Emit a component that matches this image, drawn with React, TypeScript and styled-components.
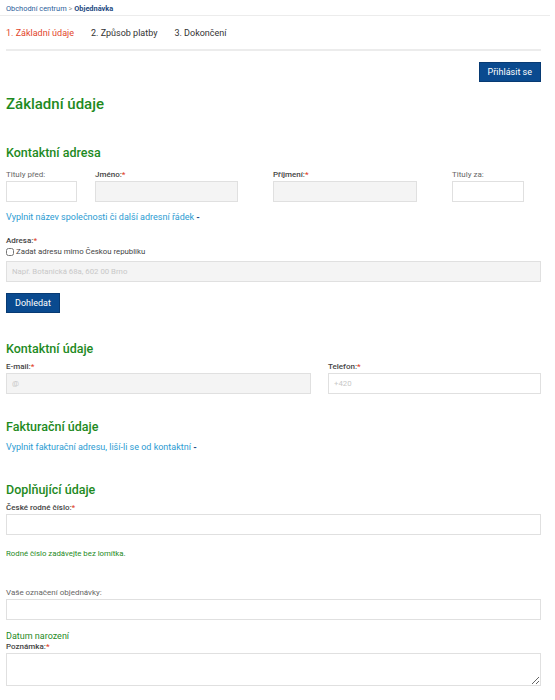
import styled, { createGlobalStyle } from 'styled-components';

const GlobalStyle = createGlobalStyle`
  body {
    margin: 0;
    background: #ffffff;
    font-family: Roboto, "Liberation Sans", Arial, sans-serif;
    color: #333333;
  }
`;

const Breadcrumb = styled.div`
  height: 16px;
  padding: 4px 0 0 6px;
  box-sizing: border-box;
  width: 550px;
  border-bottom: 1px solid #ececec;
  font-size: 7.4px;
  color: #2a5d9a;
  i {
    font-style: normal;
    color: #999999;
  }
  b {
    font-weight: 700;
    color: #1d4a82;
  }
`;

const Page = styled.div`
  padding: 0 14px 20px 6px;
`;

const Steps = styled.div`
  display: flex;
  gap: 17px;
  padding: 12px 0 11px;
  border-bottom: 2px solid #ececec;
  font-size: 9px;
`;

const Step = styled.span<{ $active?: boolean }>`
  color: ${(p) => (p.$active ? '#e2452b' : '#333333')};
`;

const TopBar = styled.div`
  display: flex;
  justify-content: flex-end;
  padding-top: 11px;
`;

const Button = styled.button`
  background: #0a4a8f;
  color: #ffffff;
  border: 1px solid #073a73;
  font-family: inherit;
  font-size: 9px;
  font-weight: 400;
  height: 20px;
  padding: 0 8px;
  cursor: pointer;
`;

const Title = styled.h1`
  margin: 13px 0 0;
  font-size: 15px;
  font-weight: 500;
  color: #1e8a1e;
`;

const Section = styled.h2<{ $top: number }>`
  margin: ${(p) => p.$top}px 0 0;
  font-size: 12.5px;
  font-weight: 500;
  color: #1e8a1e;
  line-height: 18px;
`;

const NameRow = styled.div`
  display: grid;
  grid-template-columns: 89px 178px 179px 1fr;
  margin-top: 8px;
`;

const TwoCols = styled.div`
  display: grid;
  grid-template-columns: 322px 1fr;
  margin-top: 4px;
`;

const Field = styled.div<{ $top?: number }>`
  display: flex;
  flex-direction: column;
  margin-top: ${(p) => p.$top ?? 0}px;
`;

const Label = styled.label<{ $strong?: boolean }>`
  font-size: 8px;
  line-height: 10px;
  height: 10px;
  margin-bottom: 1px;
  color: ${(p) => (p.$strong ? '#444444' : '#666666')};
  font-weight: ${(p) => (p.$strong ? 500 : 400)};
  em {
    font-style: normal;
    color: #e2452b;
  }
`;

const Input = styled.input<{ $w?: number; $grey?: boolean }>`
  box-sizing: border-box;
  width: ${(p) => (p.$w ? `${p.$w}px` : '100%')};
  height: 21px;
  border: 1px solid #e0e0e0;
  background: ${(p) => (p.$grey ? '#f4f4f4' : '#ffffff')};
  font-family: inherit;
  font-size: 7.8px;
  padding: 0 5px;
  &::placeholder {
    color: #c8c8c8;
  }
`;

const TextArea = styled.textarea`
  box-sizing: border-box;
  width: 100%;
  height: 33px;
  border: 1px solid #e0e0e0;
  font-family: inherit;
  display: block;
`;

const Toggle = styled.a<{ $top: number }>`
  display: block;
  margin-top: ${(p) => p.$top}px;
  font-size: 9px;
  color: #2b9bd2;
  text-decoration: none;
  span {
    color: #1d4a82;
    font-weight: 700;
  }
`;

const CheckRow = styled.label`
  display: flex;
  align-items: center;
  gap: 2px;
  font-size: 7.8px;
  color: #444444;
  margin: 0 0 5px;
  input {
    margin: 0;
    width: 8px;
    height: 8px;
  }
`;

const ButtonRow = styled.div`
  margin-top: 9px;
`;

const Hint = styled.div`
  margin-top: 14px;
  font-size: 7.8px;
  color: #1e8a1e;
`;

const Datum = styled.div`
  margin-top: 11px;
  font-size: 9px;
  color: #1e8a1e;
`;

export default function App() {
  return (
    <>
      <GlobalStyle />
      <Breadcrumb>
        Obchodní centrum <i>&gt;</i> <b>Objednávka</b>
      </Breadcrumb>
      <Page>
        <Steps>
          <Step $active>1. Základní údaje</Step>
          <Step>2. Způsob platby</Step>
          <Step>3. Dokončení</Step>
        </Steps>
        <TopBar>
          <Button>Přihlásit se</Button>
        </TopBar>
        <Title>Základní údaje</Title>

        <Section $top={31}>Kontaktní adresa</Section>
        <NameRow>
          <Field>
            <Label>Tituly před:</Label>
            <Input $w={71} />
          </Field>
          <Field>
            <Label $strong>
              Jméno:<em>*</em>
            </Label>
            <Input $w={143} $grey />
          </Field>
          <Field>
            <Label $strong>
              Příjmení:<em>*</em>
            </Label>
            <Input $w={144} $grey />
          </Field>
          <Field>
            <Label>Tituly za:</Label>
            <Input $w={72} />
          </Field>
        </NameRow>
        <Toggle $top={10} href="#">
          Vyplnit název společnosti či další adresní řádek <span>-</span>
        </Toggle>
        <Field $top={14}>
          <Label $strong>
            Adresa:<em>*</em>
          </Label>
          <CheckRow>
            <input type="checkbox" />
            Zadat adresu mimo Českou republiku
          </CheckRow>
          <Input $grey placeholder="Např. Botanická 68a, 602 00 Brno" />
        </Field>
        <ButtonRow>
          <Button>Dohledat</Button>
        </ButtonRow>

        <Section $top={27}>Kontaktní údaje</Section>
        <TwoCols>
          <Field>
            <Label $strong>
              E-mail:<em>*</em>
            </Label>
            <Input $w={305} $grey placeholder="@" />
          </Field>
          <Field>
            <Label $strong>
              Telefon:<em>*</em>
            </Label>
            <Input placeholder="+420" />
          </Field>
        </TwoCols>

        <Section $top={24}>Fakturační údaje</Section>
        <Toggle $top={6} href="#">
          Vyplnit fakturační adresu, liší-li se od kontaktní <span>-</span>
        </Toggle>

        <Section $top={29}>Doplňující údaje</Section>
        <Field $top={4}>
          <Label $strong>
            České rodné číslo:<em>*</em>
          </Label>
          <Input />
        </Field>
        <Hint>Rodné číslo zadávejte bez lomítka.</Hint>
        <Field $top={30}>
          <Label>Vaše označení objednávky:</Label>
          <Input />
        </Field>
        <Datum>Datum narození</Datum>
        <Field $top={1}>
          <Label $strong>
            Poznámka:<em>*</em>
          </Label>
          <TextArea />
        </Field>
      </Page>
    </>
  );
}
